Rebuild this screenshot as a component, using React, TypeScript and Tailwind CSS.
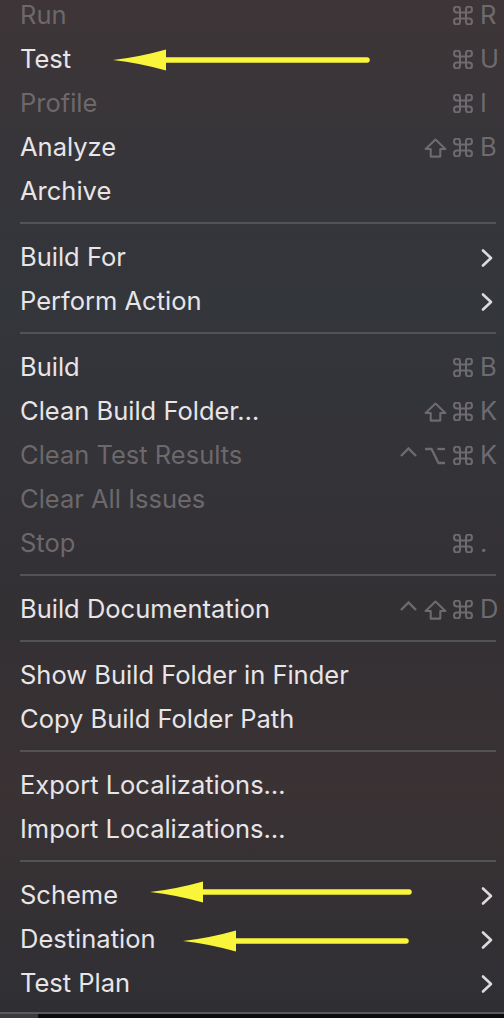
import React from "react";

type Mod = "" | "ctrl" | "shift" | "opt" | "cmd";

type Item =
  | { type: "sep" }
  | {
      type: "item";
      label: string;
      disabled?: boolean;
      mods?: [Mod, Mod, Mod];
      keyName?: string;
      sub?: boolean;
    };

const items: Item[] = [
  { type: "item", label: "Run", disabled: true, mods: ["", "", "cmd"], keyName: "R" },
  { type: "item", label: "Test", mods: ["", "", "cmd"], keyName: "U" },
  { type: "item", label: "Profile", disabled: true, mods: ["", "", "cmd"], keyName: "I" },
  { type: "item", label: "Analyze", mods: ["", "shift", "cmd"], keyName: "B" },
  { type: "item", label: "Archive" },
  { type: "sep" },
  { type: "item", label: "Build For", sub: true },
  { type: "item", label: "Perform Action", sub: true },
  { type: "sep" },
  { type: "item", label: "Build", mods: ["", "", "cmd"], keyName: "B" },
  { type: "item", label: "Clean Build Folder…", mods: ["", "shift", "cmd"], keyName: "K" },
  { type: "item", label: "Clean Test Results", disabled: true, mods: ["ctrl", "opt", "cmd"], keyName: "K" },
  { type: "item", label: "Clear All Issues", disabled: true },
  { type: "item", label: "Stop", disabled: true, mods: ["", "", "cmd"], keyName: "." },
  { type: "sep" },
  { type: "item", label: "Build Documentation", mods: ["ctrl", "shift", "cmd"], keyName: "D" },
  { type: "sep" },
  { type: "item", label: "Show Build Folder in Finder" },
  { type: "item", label: "Copy Build Folder Path" },
  { type: "sep" },
  { type: "item", label: "Export Localizations…" },
  { type: "item", label: "Import Localizations…" },
  { type: "sep" },
  { type: "item", label: "Scheme", sub: true },
  { type: "item", label: "Destination", sub: true },
  { type: "item", label: "Test Plan", sub: true },
];

const GREY = "#6e6a6f";

function ModIcon({ mod }: { mod: Mod }) {
  if (mod === "cmd")
    return (
      <svg width="20" height="19" viewBox="2.5 2.5 19 19" aria-label="⌘">
        <path
          d="M15 6v12a3 3 0 1 0 3-3H6a3 3 0 1 0 3 3V6a3 3 0 1 0-3 3h12a3 3 0 1 0-3-3"
          fill="none"
          stroke={GREY}
          strokeWidth="2"
          strokeLinecap="round"
          strokeLinejoin="round"
        />
      </svg>
    );
  if (mod === "shift")
    return (
      <svg width="23" height="20" viewBox="0 0 23 20" aria-label="⇧">
        <path
          d="M11.5 1.6 L21.4 11 H16.3 V18.6 H6.7 V11 H1.6 Z"
          fill="none"
          stroke={GREY}
          strokeWidth="2.1"
          strokeLinejoin="round"
        />
      </svg>
    );
  if (mod === "opt")
    return (
      <svg width="22" height="18" viewBox="0 0 22 18" aria-label="⌥">
        <path d="M1 2 H7.5 L14.5 16 H21" fill="none" stroke={GREY} strokeWidth="2.3" strokeLinejoin="miter" />
        <path d="M13.5 2 H21" fill="none" stroke={GREY} strokeWidth="2.3" />
      </svg>
    );
  if (mod === "ctrl")
    return (
      <svg width="19" height="12" viewBox="0 0 19 12" aria-label="⌃" className="-mt-[8px]">
        <polyline points="2,10 9.5,2.5 17,10" fill="none" stroke={GREY} strokeWidth="2.4" strokeLinejoin="miter" />
      </svg>
    );
  return null;
}

function Chevron() {
  return (
    <svg width="12" height="20" viewBox="0 0 12 20" className="mr-[4px]">
      <polyline
        points="2,2.5 10,10 2,17.5"
        fill="none"
        stroke="#dcdadc"
        strokeWidth="2.6"
        strokeLinecap="round"
        strokeLinejoin="round"
      />
    </svg>
  );
}

function Shortcut({ mods, keyName }: { mods: [Mod, Mod, Mod]; keyName: string }) {
  return (
    <div className="flex items-center text-[#6e6a6f]">
      <span className="w-[28px] flex justify-center items-center">
        <ModIcon mod={mods[0]} />
      </span>
      <span className="w-[26px] flex justify-center items-center">
        <ModIcon mod={mods[1]} />
      </span>
      <span className="w-[29px] flex justify-center items-center">
        <ModIcon mod={mods[2]} />
      </span>
      <span className="ml-[3px] w-[17px] text-left">{keyName}</span>
    </div>
  );
}

function Arrow({ tipX, y, baseX, endX }: { tipX: number; y: number; baseX: number; endX: number }) {
  const half = 10.5;
  const midX = (tipX + baseX) / 2;
  return (
    <g>
      <line x1={baseX - 4} y1={y} x2={endX} y2={y} stroke="#f9f53a" strokeWidth="5.5" strokeLinecap="round" />
      <path
        d={`M${tipX},${y} Q${midX},${y - 3} ${baseX},${y - half} L${baseX},${y + half} Q${midX},${y + 3} ${tipX},${y} Z`}
        fill="#f9f53a"
      />
    </g>
  );
}

export default function App() {
  return (
    <div className="relative w-[504px] h-[1018px] overflow-hidden bg-black font-['Inter','Liberation_Sans',sans-serif]">
      <div className="h-[1012px] overflow-hidden bg-[linear-gradient(180deg,#3e3538_0%,#35353a_20%,#33363b_30%,#333237_50%,#333034_62%,#3a3233_78%,#2f2f33_100%)]">
        <div className="-mt-[7px] flex flex-col">
          {items.map((it, i) =>
            it.type === "sep" ? (
              <div key={i} className="pt-[9px] pb-[11px] pl-[20px] pr-[8px]">
                <div className="h-[2px] bg-[#535257]" />
              </div>
            ) : (
              <div
                key={i}
                className={`h-[44px] shrink-0 flex items-center justify-between pt-[1px] pl-[20px] pr-[7px] text-[25.5px] ${
                  it.disabled ? "text-[#6c686c]" : "text-[#e7e5e8]"
                }`}
              >
                <span>{it.label}</span>
                {it.mods && it.keyName ? <Shortcut mods={it.mods} keyName={it.keyName} /> : null}
                {it.sub ? <Chevron /> : null}
              </div>
            )
          )}
        </div>
      </div>
      <div className="h-[2px] bg-[#5a5a5e]" />
      <div className="flex h-[4px]">
        <div className="w-[38px] bg-[#3a3a3c]" />
        <div className="flex-1 bg-[#0c0c0c]" />
      </div>
      <svg className="pointer-events-none absolute left-0 top-0" width="504" height="1018" viewBox="0 0 504 1018">
        <Arrow tipX={113} y={60} baseX={166} endX={367} />
        <Arrow tipX={150} y={892} baseX={203} endX={409} />
        <Arrow tipX={183} y={941} baseX={236} endX={406} />
      </svg>
    </div>
  );
}
